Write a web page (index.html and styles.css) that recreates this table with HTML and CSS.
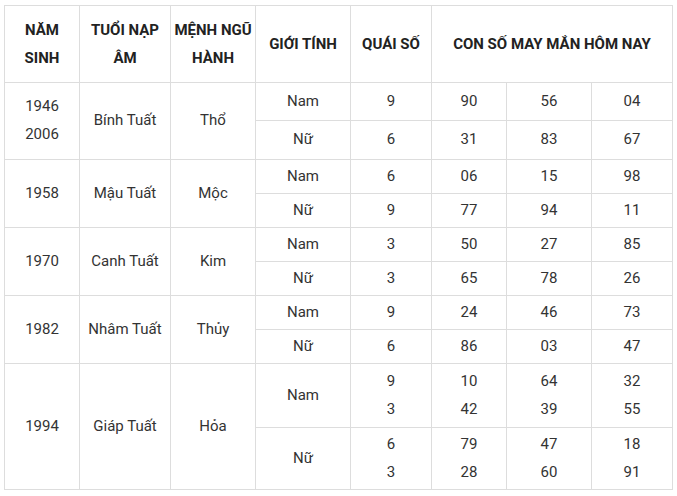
FILE: index.html
```html
<!DOCTYPE html>
<html lang="vi">
<head>
<meta charset="utf-8">
<link rel="stylesheet" href="styles.css">
</head>
<body>
<table class="lucky">
  <colgroup>
    <col class="c1"><col class="c2"><col class="c3"><col class="c4"><col class="c5"><col class="c6"><col class="c7"><col class="c8">
  </colgroup>
  <thead>
    <tr class="r-head">
      <th>NĂM<br>SINH</th>
      <th>TUỔI NẠP<br>ÂM</th>
      <th>MỆNH NGŨ<br>HÀNH</th>
      <th>GIỚI TÍNH</th>
      <th>QUÁI SỐ</th>
      <th colspan="3">CON SỐ MAY MẮN HÔM NAY</th>
    </tr>
  </thead>
  <tbody>
    <tr class="r-a">
      <td rowspan="2">1946<br>2006</td><td rowspan="2">Bính Tuất</td><td rowspan="2">Thổ</td>
      <td>Nam</td><td>9</td><td>90</td><td>56</td><td>04</td>
    </tr>
    <tr class="r-b">
      <td>Nữ</td><td>6</td><td>31</td><td>83</td><td>67</td>
    </tr>
    <tr class="r-n">
      <td rowspan="2">1958</td><td rowspan="2">Mậu Tuất</td><td rowspan="2">Mộc</td>
      <td>Nam</td><td>6</td><td>06</td><td>15</td><td>98</td>
    </tr>
    <tr class="r-n">
      <td>Nữ</td><td>9</td><td>77</td><td>94</td><td>11</td>
    </tr>
    <tr class="r-n">
      <td rowspan="2">1970</td><td rowspan="2">Canh Tuất</td><td rowspan="2">Kim</td>
      <td>Nam</td><td>3</td><td>50</td><td>27</td><td>85</td>
    </tr>
    <tr class="r-n">
      <td>Nữ</td><td>3</td><td>65</td><td>78</td><td>26</td>
    </tr>
    <tr class="r-n">
      <td rowspan="2">1982</td><td rowspan="2">Nhâm Tuất</td><td rowspan="2">Thủy</td>
      <td>Nam</td><td>9</td><td>24</td><td>46</td><td>73</td>
    </tr>
    <tr class="r-n">
      <td>Nữ</td><td>6</td><td>86</td><td>03</td><td>47</td>
    </tr>
    <tr class="r-c">
      <td rowspan="2">1994</td><td rowspan="2">Giáp Tuất</td><td rowspan="2">Hỏa</td>
      <td>Nam</td><td>9<br>3</td><td>10<br>42</td><td>64<br>39</td><td>32<br>55</td>
    </tr>
    <tr class="r-d">
      <td>Nữ</td><td>6<br>3</td><td>79<br>28</td><td>47<br>60</td><td>18<br>91</td>
    </tr>
  </tbody>
</table>
</body>
</html>
```

FILE: styles.css
```css
html, body {
  margin: 0;
  padding: 0;
  background: #ffffff;
}
body {
  padding: 5px 0 0 4px;
  font-family: Roboto, "Liberation Sans", Arial, sans-serif;
  font-size: 15px;
  color: #333333;
}
.lucky {
  border-collapse: collapse;
  table-layout: fixed;
  width: 668px;
}
.c1 { width: 75px; }
.c2 { width: 91px; }
.c3 { width: 85px; }
.c4 { width: 95px; }
.c5 { width: 81px; }
.c6 { width: 75px; }
.c7 { width: 85px; }
.c8 { width: 81px; }
.lucky th,
.lucky td {
  border: 1px solid #dddddd;
  padding: 0;
  text-align: center;
  vertical-align: middle;
  line-height: 28px;
}
.lucky td {
  padding-bottom: 2px;
}
.lucky th {
  font-weight: 700;
  color: #222222;
}
.r-head { height: 77px; }
.r-a { height: 38px; }
.r-b { height: 39px; }
.r-n { height: 34px; }
.r-c { height: 64px; }
.r-d { height: 62px; }
```
